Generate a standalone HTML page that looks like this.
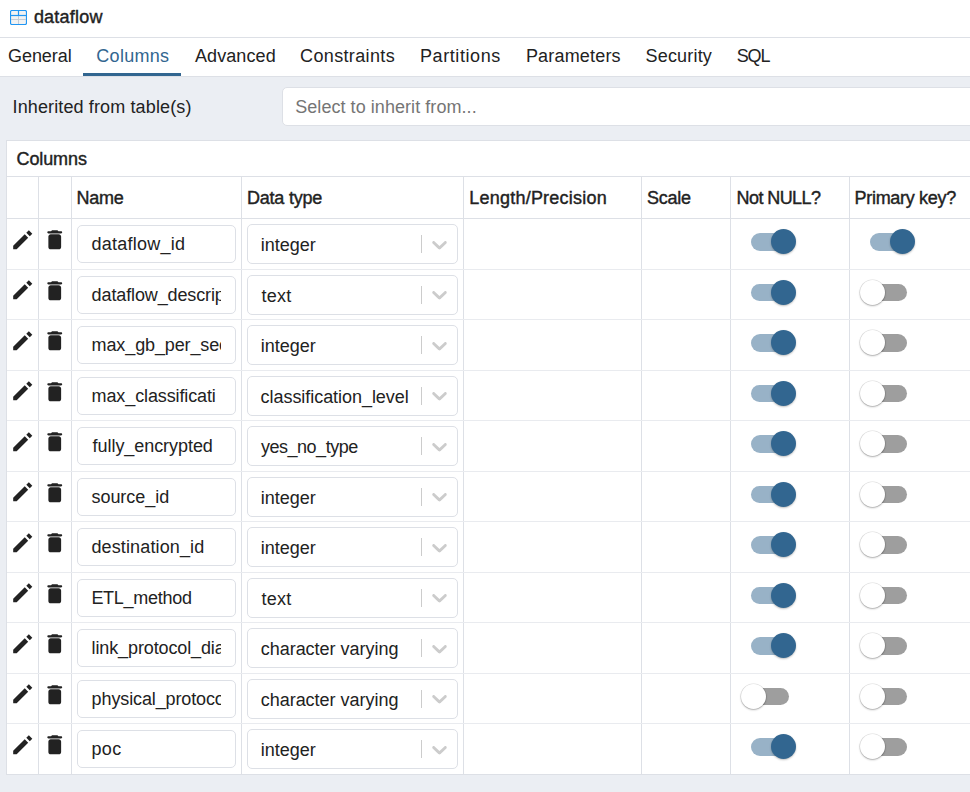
<!DOCTYPE html><html><head><meta charset="utf-8"><style>
html,body{margin:0;padding:0}
body{width:970px;height:792px;overflow:hidden;background:#ebeef3;position:relative;font-family:"Liberation Sans", sans-serif;color:#222}
.t{position:absolute;line-height:0;white-space:nowrap}
.hdr{position:absolute;left:0;top:0;width:970px;height:37px;background:#fff;border-bottom:1px solid #dde0e6}
.tabs{position:absolute;left:0;top:38px;width:970px;height:38px;background:#fff;border-bottom:1px solid #dde0e6}
.ul{position:absolute;left:83px;top:73px;width:98px;height:3px;background:#326690}
.inp{position:absolute;background:#fff;border:1px solid #dde0e6;border-radius:5px;box-sizing:border-box}
.panel{position:absolute;left:6px;top:140px;width:1000px;height:635px;background:#fff;border:1px solid #dde0e6;box-sizing:border-box}
.hl{position:absolute;height:1px;background:#dde0e6}
.vl{position:absolute;width:1px;background:#dde0e6}
.ic{position:absolute;width:25.5px;height:25.5px}
.ic svg{width:100%;height:100%;display:block;fill:#222}
.chev{position:absolute;width:25px;height:25px}
.chev svg{width:100%;height:100%;display:block;fill:#ccc}
.sep{position:absolute;width:1px;height:18px;background:#ccc}
.clip{position:absolute;overflow:hidden;height:40px}
.clip .t{left:0}
.trk{position:absolute;height:17.5px;width:42.5px;border-radius:9px}
.on{background:#98b2c7}
.off{background:#9e9e9e}
.th{position:absolute;width:25px;height:25px;border-radius:50%}
.th.on{background:#326690;box-shadow:0 1px 2px rgba(0,0,0,.25)}
.th.off{background:#fff;box-shadow:0 0 0 0.6px rgba(0,0,0,.12),0 1px 2px rgba(0,0,0,.28)}
</style></head><body>
<div class="hdr"></div>
<svg style="position:absolute;left:10px;top:10px" width="17" height="15" viewBox="0 0 17 15">
<rect x="0.5" y="0.5" width="16" height="14" rx="1.5" fill="#f2f2f2" stroke="#2196f3" stroke-width="1.2"/>
<line x1="1" y1="9.5" x2="16" y2="9.5" stroke="#c5ccd6" stroke-width="1"/>
<line x1="8.5" y1="6" x2="8.5" y2="14" stroke="#c5ccd6" stroke-width="1"/>
<line x1="1" y1="5.5" x2="16" y2="5.5" stroke="#2196f3" stroke-width="1.2"/>
<line x1="8.5" y1="1" x2="8.5" y2="5.5" stroke="#2196f3" stroke-width="1.2"/>
</svg>
<div class="t" style="left:33.9px;top:16.86px;font-size:18px;color:#222;letter-spacing:0.214px;-webkit-text-stroke:0.4px #222;">dataflow</div>
<div class="tabs"></div><div class="ul"></div>
<div class="t" style="left:8.1px;top:55.76px;font-size:18px;color:#222;letter-spacing:-0.083px;">General</div>
<div class="t" style="left:96.3px;top:55.76px;font-size:18px;color:#326690;letter-spacing:0.300px;">Columns</div>
<div class="t" style="left:195.0px;top:55.76px;font-size:18px;color:#222;letter-spacing:0.086px;">Advanced</div>
<div class="t" style="left:300.1px;top:55.76px;font-size:18px;color:#222;letter-spacing:0.350px;">Constraints</div>
<div class="t" style="left:420.0px;top:55.76px;font-size:18px;color:#222;letter-spacing:0.578px;">Partitions</div>
<div class="t" style="left:525.9px;top:55.76px;font-size:18px;color:#222;letter-spacing:0.189px;">Parameters</div>
<div class="t" style="left:645.6px;top:55.76px;font-size:18px;color:#222;letter-spacing:0.171px;">Security</div>
<div class="t" style="left:736.8000000000001px;top:55.76px;font-size:18px;color:#222;letter-spacing:-1.200px;">SQL</div>
<div class="t" style="left:12.6px;top:106.76px;font-size:18px;color:#222;letter-spacing:0.123px;">Inherited from table(s)</div>
<div class="inp" style="left:282px;top:87px;width:720px;height:39px"></div>
<div class="t" style="left:295.20000000000005px;top:106.96px;font-size:18px;color:#757575;letter-spacing:0.058px;">Select to inherit from...</div>
<div class="panel"></div>
<div class="t" style="left:16.5px;top:158.76px;font-size:18px;color:#222;letter-spacing:-0.100px;-webkit-text-stroke:0.4px #222;">Columns</div>
<div class="hl" style="left:7px;top:176px;width:963px"></div>
<div class="hl" style="left:7px;top:218px;width:963px"></div>
<div class="vl" style="left:38px;top:177px;height:597px"></div>
<div class="vl" style="left:71px;top:177px;height:597px"></div>
<div class="vl" style="left:241px;top:177px;height:597px"></div>
<div class="vl" style="left:463px;top:177px;height:597px"></div>
<div class="vl" style="left:641px;top:177px;height:597px"></div>
<div class="vl" style="left:730px;top:177px;height:597px"></div>
<div class="vl" style="left:849px;top:177px;height:597px"></div>
<div class="t" style="left:76.39999999999999px;top:197.76px;font-size:18px;color:#222;letter-spacing:-0.200px;-webkit-text-stroke:0.4px #222;">Name</div>
<div class="t" style="left:247.0px;top:197.76px;font-size:18px;color:#222;letter-spacing:-0.225px;-webkit-text-stroke:0.4px #222;">Data type</div>
<div class="t" style="left:469.3px;top:197.76px;font-size:18px;color:#222;letter-spacing:0.220px;-webkit-text-stroke:0.4px #222;">Length/Precision</div>
<div class="t" style="left:647.1px;top:197.76px;font-size:18px;color:#222;letter-spacing:-0.300px;-webkit-text-stroke:0.4px #222;">Scale</div>
<div class="t" style="left:736.6px;top:197.76px;font-size:18px;color:#222;letter-spacing:-0.588px;-webkit-text-stroke:0.4px #222;">Not NULL?</div>
<div class="t" style="left:854.6px;top:197.76px;font-size:18px;color:#222;letter-spacing:-0.309px;-webkit-text-stroke:0.4px #222;">Primary key?</div>
<div class="ic" style="left:9.7px;top:226.70px"><svg viewBox="0 0 24 24"><path d="M3 17.74L13.88 6.86L17.14 10.12L6.26 21H3.4Q3 21 3 20.6Z M15.34 5.40L17.74 3L21 6.26L18.6 8.66Z"/></svg></div>
<div class="ic" style="left:41.7px;top:227.00px"><svg viewBox="0 0 24 24"><path d="M6 18.8c0 1.2.9 2.2 2.2 2.2h7.6c1.2 0 2.2-1 2.2-2.2V9c0-1.2-1-2.2-2.2-2.2H8.2c-1.2 0-2.2 1-2.2 2.2v9.8zM18 4h-2.5l-.71-.71c-.18-.18-.44-.29-.7-.29H9.91c-.26 0-.52.11-.7.29L8.5 4H6c-.55 0-1 .45-1 1s.45 1 1 1h12c.55 0 1-.45 1-1s-.45-1-1-1z"/></svg></div>
<div class="inp" style="left:77px;top:225.00px;width:159px;height:38px"></div>
<div class="clip" style="left:91px;top:218.00px;width:130px;height:50px"><div class="t" style="left:0.5000000000000057px;top:26.26px;font-size:18px;color:#222;letter-spacing:0.240px;">dataflow_id</div></div>
<div class="inp" style="left:247px;top:224.00px;width:211px;height:40px"></div>
<div class="clip" style="left:260px;top:218.00px;width:150px;height:50px"><div class="t" style="left:0.7999999999999886px;top:27.16px;font-size:18px;color:#222;letter-spacing:0.000px;">integer</div></div>
<div class="sep" style="left:421px;top:235.20px"></div>
<div class="chev" style="left:427px;top:231.80px"><svg viewBox="0 0 20 20"><path d="M4.516 7.548c0.436-0.446 1.043-0.481 1.576 0l3.908 3.747 3.908-3.747c0.533-0.481 1.141-0.446 1.574 0 0.436 0.445 0.408 1.197 0 1.615-0.406 0.418-4.695 4.502-4.695 4.502-0.217 0.223-0.502 0.335-0.787 0.335s-0.57-0.112-0.789-0.335c0 0-4.287-4.084-4.695-4.502s-0.436-1.17 0-1.615z"/></svg></div>
<div class="trk on" style="left:751px;top:233.05px"></div><div class="th on" style="left:771px;top:229.30px"></div>
<div class="trk on" style="left:870px;top:233.05px"></div><div class="th on" style="left:890px;top:229.30px"></div>
<div class="hl" style="left:7px;top:268.50px;width:963px;background:#e9ebef"></div>
<div class="ic" style="left:9.7px;top:277.20px"><svg viewBox="0 0 24 24"><path d="M3 17.74L13.88 6.86L17.14 10.12L6.26 21H3.4Q3 21 3 20.6Z M15.34 5.40L17.74 3L21 6.26L18.6 8.66Z"/></svg></div>
<div class="ic" style="left:41.7px;top:277.50px"><svg viewBox="0 0 24 24"><path d="M6 18.8c0 1.2.9 2.2 2.2 2.2h7.6c1.2 0 2.2-1 2.2-2.2V9c0-1.2-1-2.2-2.2-2.2H8.2c-1.2 0-2.2 1-2.2 2.2v9.8zM18 4h-2.5l-.71-.71c-.18-.18-.44-.29-.7-.29H9.91c-.26 0-.52.11-.7.29L8.5 4H6c-.55 0-1 .45-1 1s.45 1 1 1h12c.55 0 1-.45 1-1s-.45-1-1-1z"/></svg></div>
<div class="inp" style="left:77px;top:275.50px;width:159px;height:38px"></div>
<div class="clip" style="left:91px;top:268.50px;width:130px;height:50px"><div class="t" style="left:0.6px;top:26.26px;font-size:18px;color:#222;letter-spacing:-0.12px;">dataflow_descrip</div></div>
<div class="inp" style="left:247px;top:274.50px;width:211px;height:40px"></div>
<div class="clip" style="left:260px;top:268.50px;width:150px;height:50px"><div class="t" style="left:1.4999999999999774px;top:27.16px;font-size:18px;color:#222;letter-spacing:0.233px;">text</div></div>
<div class="sep" style="left:421px;top:285.70px"></div>
<div class="chev" style="left:427px;top:282.30px"><svg viewBox="0 0 20 20"><path d="M4.516 7.548c0.436-0.446 1.043-0.481 1.576 0l3.908 3.747 3.908-3.747c0.533-0.481 1.141-0.446 1.574 0 0.436 0.445 0.408 1.197 0 1.615-0.406 0.418-4.695 4.502-4.695 4.502-0.217 0.223-0.502 0.335-0.787 0.335s-0.57-0.112-0.789-0.335c0 0-4.287-4.084-4.695-4.502s-0.436-1.17 0-1.615z"/></svg></div>
<div class="trk on" style="left:751px;top:283.55px"></div><div class="th on" style="left:771px;top:279.80px"></div>
<div class="trk off" style="left:864.2px;top:283.55px"></div><div class="th off" style="left:860.2px;top:279.80px"></div>
<div class="hl" style="left:7px;top:319.00px;width:963px;background:#e9ebef"></div>
<div class="ic" style="left:9.7px;top:327.70px"><svg viewBox="0 0 24 24"><path d="M3 17.74L13.88 6.86L17.14 10.12L6.26 21H3.4Q3 21 3 20.6Z M15.34 5.40L17.74 3L21 6.26L18.6 8.66Z"/></svg></div>
<div class="ic" style="left:41.7px;top:328.00px"><svg viewBox="0 0 24 24"><path d="M6 18.8c0 1.2.9 2.2 2.2 2.2h7.6c1.2 0 2.2-1 2.2-2.2V9c0-1.2-1-2.2-2.2-2.2H8.2c-1.2 0-2.2 1-2.2 2.2v9.8zM18 4h-2.5l-.71-.71c-.18-.18-.44-.29-.7-.29H9.91c-.26 0-.52.11-.7.29L8.5 4H6c-.55 0-1 .45-1 1s.45 1 1 1h12c.55 0 1-.45 1-1s-.45-1-1-1z"/></svg></div>
<div class="inp" style="left:77px;top:326.00px;width:159px;height:38px"></div>
<div class="clip" style="left:91px;top:319.00px;width:130px;height:50px"><div class="t" style="left:0.6px;top:26.26px;font-size:18px;color:#222;letter-spacing:-0.12px;">max_gb_per_sec</div></div>
<div class="inp" style="left:247px;top:325.00px;width:211px;height:40px"></div>
<div class="clip" style="left:260px;top:319.00px;width:150px;height:50px"><div class="t" style="left:0.7999999999999886px;top:27.16px;font-size:18px;color:#222;letter-spacing:0.000px;">integer</div></div>
<div class="sep" style="left:421px;top:336.20px"></div>
<div class="chev" style="left:427px;top:332.80px"><svg viewBox="0 0 20 20"><path d="M4.516 7.548c0.436-0.446 1.043-0.481 1.576 0l3.908 3.747 3.908-3.747c0.533-0.481 1.141-0.446 1.574 0 0.436 0.445 0.408 1.197 0 1.615-0.406 0.418-4.695 4.502-4.695 4.502-0.217 0.223-0.502 0.335-0.787 0.335s-0.57-0.112-0.789-0.335c0 0-4.287-4.084-4.695-4.502s-0.436-1.17 0-1.615z"/></svg></div>
<div class="trk on" style="left:751px;top:334.05px"></div><div class="th on" style="left:771px;top:330.30px"></div>
<div class="trk off" style="left:864.2px;top:334.05px"></div><div class="th off" style="left:860.2px;top:330.30px"></div>
<div class="hl" style="left:7px;top:369.50px;width:963px;background:#e9ebef"></div>
<div class="ic" style="left:9.7px;top:378.20px"><svg viewBox="0 0 24 24"><path d="M3 17.74L13.88 6.86L17.14 10.12L6.26 21H3.4Q3 21 3 20.6Z M15.34 5.40L17.74 3L21 6.26L18.6 8.66Z"/></svg></div>
<div class="ic" style="left:41.7px;top:378.50px"><svg viewBox="0 0 24 24"><path d="M6 18.8c0 1.2.9 2.2 2.2 2.2h7.6c1.2 0 2.2-1 2.2-2.2V9c0-1.2-1-2.2-2.2-2.2H8.2c-1.2 0-2.2 1-2.2 2.2v9.8zM18 4h-2.5l-.71-.71c-.18-.18-.44-.29-.7-.29H9.91c-.26 0-.52.11-.7.29L8.5 4H6c-.55 0-1 .45-1 1s.45 1 1 1h12c.55 0 1-.45 1-1s-.45-1-1-1z"/></svg></div>
<div class="inp" style="left:77px;top:376.50px;width:159px;height:38px"></div>
<div class="clip" style="left:91px;top:369.50px;width:130px;height:50px"><div class="t" style="left:0.6px;top:26.26px;font-size:18px;color:#222;letter-spacing:-0.12px;">max_classificati</div></div>
<div class="inp" style="left:247px;top:375.50px;width:211px;height:40px"></div>
<div class="clip" style="left:260px;top:369.50px;width:150px;height:50px"><div class="t" style="left:0.6px;top:27.16px;font-size:18px;color:#222;letter-spacing:-0.05px;">classification_level</div></div>
<div class="sep" style="left:421px;top:386.70px"></div>
<div class="chev" style="left:427px;top:383.30px"><svg viewBox="0 0 20 20"><path d="M4.516 7.548c0.436-0.446 1.043-0.481 1.576 0l3.908 3.747 3.908-3.747c0.533-0.481 1.141-0.446 1.574 0 0.436 0.445 0.408 1.197 0 1.615-0.406 0.418-4.695 4.502-4.695 4.502-0.217 0.223-0.502 0.335-0.787 0.335s-0.57-0.112-0.789-0.335c0 0-4.287-4.084-4.695-4.502s-0.436-1.17 0-1.615z"/></svg></div>
<div class="trk on" style="left:751px;top:384.55px"></div><div class="th on" style="left:771px;top:380.80px"></div>
<div class="trk off" style="left:864.2px;top:384.55px"></div><div class="th off" style="left:860.2px;top:380.80px"></div>
<div class="hl" style="left:7px;top:420.00px;width:963px;background:#e9ebef"></div>
<div class="ic" style="left:9.7px;top:428.70px"><svg viewBox="0 0 24 24"><path d="M3 17.74L13.88 6.86L17.14 10.12L6.26 21H3.4Q3 21 3 20.6Z M15.34 5.40L17.74 3L21 6.26L18.6 8.66Z"/></svg></div>
<div class="ic" style="left:41.7px;top:429.00px"><svg viewBox="0 0 24 24"><path d="M6 18.8c0 1.2.9 2.2 2.2 2.2h7.6c1.2 0 2.2-1 2.2-2.2V9c0-1.2-1-2.2-2.2-2.2H8.2c-1.2 0-2.2 1-2.2 2.2v9.8zM18 4h-2.5l-.71-.71c-.18-.18-.44-.29-.7-.29H9.91c-.26 0-.52.11-.7.29L8.5 4H6c-.55 0-1 .45-1 1s.45 1 1 1h12c.55 0 1-.45 1-1s-.45-1-1-1z"/></svg></div>
<div class="inp" style="left:77px;top:427.00px;width:159px;height:38px"></div>
<div class="clip" style="left:91px;top:420.00px;width:130px;height:50px"><div class="t" style="left:1.6px;top:26.26px;font-size:18px;color:#222;letter-spacing:-0.057px;">fully_encrypted</div></div>
<div class="inp" style="left:247px;top:426.00px;width:211px;height:40px"></div>
<div class="clip" style="left:260px;top:420.00px;width:150px;height:50px"><div class="t" style="left:0.9000000000000113px;top:27.16px;font-size:18px;color:#222;letter-spacing:-0.470px;">yes_no_type</div></div>
<div class="sep" style="left:421px;top:437.20px"></div>
<div class="chev" style="left:427px;top:433.80px"><svg viewBox="0 0 20 20"><path d="M4.516 7.548c0.436-0.446 1.043-0.481 1.576 0l3.908 3.747 3.908-3.747c0.533-0.481 1.141-0.446 1.574 0 0.436 0.445 0.408 1.197 0 1.615-0.406 0.418-4.695 4.502-4.695 4.502-0.217 0.223-0.502 0.335-0.787 0.335s-0.57-0.112-0.789-0.335c0 0-4.287-4.084-4.695-4.502s-0.436-1.17 0-1.615z"/></svg></div>
<div class="trk on" style="left:751px;top:435.05px"></div><div class="th on" style="left:771px;top:431.30px"></div>
<div class="trk off" style="left:864.2px;top:435.05px"></div><div class="th off" style="left:860.2px;top:431.30px"></div>
<div class="hl" style="left:7px;top:470.50px;width:963px;background:#e9ebef"></div>
<div class="ic" style="left:9.7px;top:479.20px"><svg viewBox="0 0 24 24"><path d="M3 17.74L13.88 6.86L17.14 10.12L6.26 21H3.4Q3 21 3 20.6Z M15.34 5.40L17.74 3L21 6.26L18.6 8.66Z"/></svg></div>
<div class="ic" style="left:41.7px;top:479.50px"><svg viewBox="0 0 24 24"><path d="M6 18.8c0 1.2.9 2.2 2.2 2.2h7.6c1.2 0 2.2-1 2.2-2.2V9c0-1.2-1-2.2-2.2-2.2H8.2c-1.2 0-2.2 1-2.2 2.2v9.8zM18 4h-2.5l-.71-.71c-.18-.18-.44-.29-.7-.29H9.91c-.26 0-.52.11-.7.29L8.5 4H6c-.55 0-1 .45-1 1s.45 1 1 1h12c.55 0 1-.45 1-1s-.45-1-1-1z"/></svg></div>
<div class="inp" style="left:77px;top:477.50px;width:159px;height:38px"></div>
<div class="clip" style="left:91px;top:470.50px;width:130px;height:50px"><div class="t" style="left:0.39999999999999714px;top:26.26px;font-size:18px;color:#222;letter-spacing:-0.013px;">source_id</div></div>
<div class="inp" style="left:247px;top:476.50px;width:211px;height:40px"></div>
<div class="clip" style="left:260px;top:470.50px;width:150px;height:50px"><div class="t" style="left:0.7999999999999886px;top:27.16px;font-size:18px;color:#222;letter-spacing:0.000px;">integer</div></div>
<div class="sep" style="left:421px;top:487.70px"></div>
<div class="chev" style="left:427px;top:484.30px"><svg viewBox="0 0 20 20"><path d="M4.516 7.548c0.436-0.446 1.043-0.481 1.576 0l3.908 3.747 3.908-3.747c0.533-0.481 1.141-0.446 1.574 0 0.436 0.445 0.408 1.197 0 1.615-0.406 0.418-4.695 4.502-4.695 4.502-0.217 0.223-0.502 0.335-0.787 0.335s-0.57-0.112-0.789-0.335c0 0-4.287-4.084-4.695-4.502s-0.436-1.17 0-1.615z"/></svg></div>
<div class="trk on" style="left:751px;top:485.55px"></div><div class="th on" style="left:771px;top:481.80px"></div>
<div class="trk off" style="left:864.2px;top:485.55px"></div><div class="th off" style="left:860.2px;top:481.80px"></div>
<div class="hl" style="left:7px;top:521.00px;width:963px;background:#e9ebef"></div>
<div class="ic" style="left:9.7px;top:529.70px"><svg viewBox="0 0 24 24"><path d="M3 17.74L13.88 6.86L17.14 10.12L6.26 21H3.4Q3 21 3 20.6Z M15.34 5.40L17.74 3L21 6.26L18.6 8.66Z"/></svg></div>
<div class="ic" style="left:41.7px;top:530.00px"><svg viewBox="0 0 24 24"><path d="M6 18.8c0 1.2.9 2.2 2.2 2.2h7.6c1.2 0 2.2-1 2.2-2.2V9c0-1.2-1-2.2-2.2-2.2H8.2c-1.2 0-2.2 1-2.2 2.2v9.8zM18 4h-2.5l-.71-.71c-.18-.18-.44-.29-.7-.29H9.91c-.26 0-.52.11-.7.29L8.5 4H6c-.55 0-1 .45-1 1s.45 1 1 1h12c.55 0 1-.45 1-1s-.45-1-1-1z"/></svg></div>
<div class="inp" style="left:77px;top:528.00px;width:159px;height:38px"></div>
<div class="clip" style="left:91px;top:521.00px;width:130px;height:50px"><div class="t" style="left:0.39999999999999714px;top:26.26px;font-size:18px;color:#222;letter-spacing:0.138px;">destination_id</div></div>
<div class="inp" style="left:247px;top:527.00px;width:211px;height:40px"></div>
<div class="clip" style="left:260px;top:521.00px;width:150px;height:50px"><div class="t" style="left:0.7999999999999886px;top:27.16px;font-size:18px;color:#222;letter-spacing:0.000px;">integer</div></div>
<div class="sep" style="left:421px;top:538.20px"></div>
<div class="chev" style="left:427px;top:534.80px"><svg viewBox="0 0 20 20"><path d="M4.516 7.548c0.436-0.446 1.043-0.481 1.576 0l3.908 3.747 3.908-3.747c0.533-0.481 1.141-0.446 1.574 0 0.436 0.445 0.408 1.197 0 1.615-0.406 0.418-4.695 4.502-4.695 4.502-0.217 0.223-0.502 0.335-0.787 0.335s-0.57-0.112-0.789-0.335c0 0-4.287-4.084-4.695-4.502s-0.436-1.17 0-1.615z"/></svg></div>
<div class="trk on" style="left:751px;top:536.05px"></div><div class="th on" style="left:771px;top:532.30px"></div>
<div class="trk off" style="left:864.2px;top:536.05px"></div><div class="th off" style="left:860.2px;top:532.30px"></div>
<div class="hl" style="left:7px;top:571.50px;width:963px;background:#e9ebef"></div>
<div class="ic" style="left:9.7px;top:580.20px"><svg viewBox="0 0 24 24"><path d="M3 17.74L13.88 6.86L17.14 10.12L6.26 21H3.4Q3 21 3 20.6Z M15.34 5.40L17.74 3L21 6.26L18.6 8.66Z"/></svg></div>
<div class="ic" style="left:41.7px;top:580.50px"><svg viewBox="0 0 24 24"><path d="M6 18.8c0 1.2.9 2.2 2.2 2.2h7.6c1.2 0 2.2-1 2.2-2.2V9c0-1.2-1-2.2-2.2-2.2H8.2c-1.2 0-2.2 1-2.2 2.2v9.8zM18 4h-2.5l-.71-.71c-.18-.18-.44-.29-.7-.29H9.91c-.26 0-.52.11-.7.29L8.5 4H6c-.55 0-1 .45-1 1s.45 1 1 1h12c.55 0 1-.45 1-1s-.45-1-1-1z"/></svg></div>
<div class="inp" style="left:77px;top:578.50px;width:159px;height:38px"></div>
<div class="clip" style="left:91px;top:571.50px;width:130px;height:50px"><div class="t" style="left:0.39999999999999714px;top:26.26px;font-size:18px;color:#222;letter-spacing:-0.278px;">ETL_method</div></div>
<div class="inp" style="left:247px;top:577.50px;width:211px;height:40px"></div>
<div class="clip" style="left:260px;top:571.50px;width:150px;height:50px"><div class="t" style="left:1.4999999999999774px;top:27.16px;font-size:18px;color:#222;letter-spacing:0.233px;">text</div></div>
<div class="sep" style="left:421px;top:588.70px"></div>
<div class="chev" style="left:427px;top:585.30px"><svg viewBox="0 0 20 20"><path d="M4.516 7.548c0.436-0.446 1.043-0.481 1.576 0l3.908 3.747 3.908-3.747c0.533-0.481 1.141-0.446 1.574 0 0.436 0.445 0.408 1.197 0 1.615-0.406 0.418-4.695 4.502-4.695 4.502-0.217 0.223-0.502 0.335-0.787 0.335s-0.57-0.112-0.789-0.335c0 0-4.287-4.084-4.695-4.502s-0.436-1.17 0-1.615z"/></svg></div>
<div class="trk on" style="left:751px;top:586.55px"></div><div class="th on" style="left:771px;top:582.80px"></div>
<div class="trk off" style="left:864.2px;top:586.55px"></div><div class="th off" style="left:860.2px;top:582.80px"></div>
<div class="hl" style="left:7px;top:622.00px;width:963px;background:#e9ebef"></div>
<div class="ic" style="left:9.7px;top:630.70px"><svg viewBox="0 0 24 24"><path d="M3 17.74L13.88 6.86L17.14 10.12L6.26 21H3.4Q3 21 3 20.6Z M15.34 5.40L17.74 3L21 6.26L18.6 8.66Z"/></svg></div>
<div class="ic" style="left:41.7px;top:631.00px"><svg viewBox="0 0 24 24"><path d="M6 18.8c0 1.2.9 2.2 2.2 2.2h7.6c1.2 0 2.2-1 2.2-2.2V9c0-1.2-1-2.2-2.2-2.2H8.2c-1.2 0-2.2 1-2.2 2.2v9.8zM18 4h-2.5l-.71-.71c-.18-.18-.44-.29-.7-.29H9.91c-.26 0-.52.11-.7.29L8.5 4H6c-.55 0-1 .45-1 1s.45 1 1 1h12c.55 0 1-.45 1-1s-.45-1-1-1z"/></svg></div>
<div class="inp" style="left:77px;top:629.00px;width:159px;height:38px"></div>
<div class="clip" style="left:91px;top:622.00px;width:130px;height:50px"><div class="t" style="left:0.6px;top:26.26px;font-size:18px;color:#222;letter-spacing:-0.12px;">link_protocol_dia</div></div>
<div class="inp" style="left:247px;top:628.00px;width:211px;height:40px"></div>
<div class="clip" style="left:260px;top:622.00px;width:150px;height:50px"><div class="t" style="left:0.7000000000000227px;top:27.16px;font-size:18px;color:#222;letter-spacing:-0.019px;">character varying</div></div>
<div class="sep" style="left:421px;top:639.20px"></div>
<div class="chev" style="left:427px;top:635.80px"><svg viewBox="0 0 20 20"><path d="M4.516 7.548c0.436-0.446 1.043-0.481 1.576 0l3.908 3.747 3.908-3.747c0.533-0.481 1.141-0.446 1.574 0 0.436 0.445 0.408 1.197 0 1.615-0.406 0.418-4.695 4.502-4.695 4.502-0.217 0.223-0.502 0.335-0.787 0.335s-0.57-0.112-0.789-0.335c0 0-4.287-4.084-4.695-4.502s-0.436-1.17 0-1.615z"/></svg></div>
<div class="trk on" style="left:751px;top:637.05px"></div><div class="th on" style="left:771px;top:633.30px"></div>
<div class="trk off" style="left:864.2px;top:637.05px"></div><div class="th off" style="left:860.2px;top:633.30px"></div>
<div class="hl" style="left:7px;top:672.50px;width:963px;background:#e9ebef"></div>
<div class="ic" style="left:9.7px;top:681.20px"><svg viewBox="0 0 24 24"><path d="M3 17.74L13.88 6.86L17.14 10.12L6.26 21H3.4Q3 21 3 20.6Z M15.34 5.40L17.74 3L21 6.26L18.6 8.66Z"/></svg></div>
<div class="ic" style="left:41.7px;top:681.50px"><svg viewBox="0 0 24 24"><path d="M6 18.8c0 1.2.9 2.2 2.2 2.2h7.6c1.2 0 2.2-1 2.2-2.2V9c0-1.2-1-2.2-2.2-2.2H8.2c-1.2 0-2.2 1-2.2 2.2v9.8zM18 4h-2.5l-.71-.71c-.18-.18-.44-.29-.7-.29H9.91c-.26 0-.52.11-.7.29L8.5 4H6c-.55 0-1 .45-1 1s.45 1 1 1h12c.55 0 1-.45 1-1s-.45-1-1-1z"/></svg></div>
<div class="inp" style="left:77px;top:679.50px;width:159px;height:38px"></div>
<div class="clip" style="left:91px;top:672.50px;width:130px;height:50px"><div class="t" style="left:0.6px;top:26.26px;font-size:18px;color:#222;letter-spacing:-0.12px;">physical_protocol</div></div>
<div class="inp" style="left:247px;top:678.50px;width:211px;height:40px"></div>
<div class="clip" style="left:260px;top:672.50px;width:150px;height:50px"><div class="t" style="left:0.7000000000000227px;top:27.16px;font-size:18px;color:#222;letter-spacing:-0.019px;">character varying</div></div>
<div class="sep" style="left:421px;top:689.70px"></div>
<div class="chev" style="left:427px;top:686.30px"><svg viewBox="0 0 20 20"><path d="M4.516 7.548c0.436-0.446 1.043-0.481 1.576 0l3.908 3.747 3.908-3.747c0.533-0.481 1.141-0.446 1.574 0 0.436 0.445 0.408 1.197 0 1.615-0.406 0.418-4.695 4.502-4.695 4.502-0.217 0.223-0.502 0.335-0.787 0.335s-0.57-0.112-0.789-0.335c0 0-4.287-4.084-4.695-4.502s-0.436-1.17 0-1.615z"/></svg></div>
<div class="trk off" style="left:746.3px;top:687.55px"></div><div class="th off" style="left:741.3px;top:683.80px"></div>
<div class="trk off" style="left:864.2px;top:687.55px"></div><div class="th off" style="left:860.2px;top:683.80px"></div>
<div class="hl" style="left:7px;top:723.00px;width:963px;background:#e9ebef"></div>
<div class="ic" style="left:9.7px;top:731.70px"><svg viewBox="0 0 24 24"><path d="M3 17.74L13.88 6.86L17.14 10.12L6.26 21H3.4Q3 21 3 20.6Z M15.34 5.40L17.74 3L21 6.26L18.6 8.66Z"/></svg></div>
<div class="ic" style="left:41.7px;top:732.00px"><svg viewBox="0 0 24 24"><path d="M6 18.8c0 1.2.9 2.2 2.2 2.2h7.6c1.2 0 2.2-1 2.2-2.2V9c0-1.2-1-2.2-2.2-2.2H8.2c-1.2 0-2.2 1-2.2 2.2v9.8zM18 4h-2.5l-.71-.71c-.18-.18-.44-.29-.7-.29H9.91c-.26 0-.52.11-.7.29L8.5 4H6c-.55 0-1 .45-1 1s.45 1 1 1h12c.55 0 1-.45 1-1s-.45-1-1-1z"/></svg></div>
<div class="inp" style="left:77px;top:730.00px;width:159px;height:38px"></div>
<div class="clip" style="left:91px;top:723.00px;width:130px;height:50px"><div class="t" style="left:0.5000000000000057px;top:26.26px;font-size:18px;color:#222;letter-spacing:0.350px;">poc</div></div>
<div class="inp" style="left:247px;top:729.00px;width:211px;height:40px"></div>
<div class="clip" style="left:260px;top:723.00px;width:150px;height:50px"><div class="t" style="left:0.7999999999999886px;top:27.16px;font-size:18px;color:#222;letter-spacing:0.000px;">integer</div></div>
<div class="sep" style="left:421px;top:740.20px"></div>
<div class="chev" style="left:427px;top:736.80px"><svg viewBox="0 0 20 20"><path d="M4.516 7.548c0.436-0.446 1.043-0.481 1.576 0l3.908 3.747 3.908-3.747c0.533-0.481 1.141-0.446 1.574 0 0.436 0.445 0.408 1.197 0 1.615-0.406 0.418-4.695 4.502-4.695 4.502-0.217 0.223-0.502 0.335-0.787 0.335s-0.57-0.112-0.789-0.335c0 0-4.287-4.084-4.695-4.502s-0.436-1.17 0-1.615z"/></svg></div>
<div class="trk on" style="left:751px;top:738.05px"></div><div class="th on" style="left:771px;top:734.30px"></div>
<div class="trk off" style="left:864.2px;top:738.05px"></div><div class="th off" style="left:860.2px;top:734.30px"></div>
</body></html>
